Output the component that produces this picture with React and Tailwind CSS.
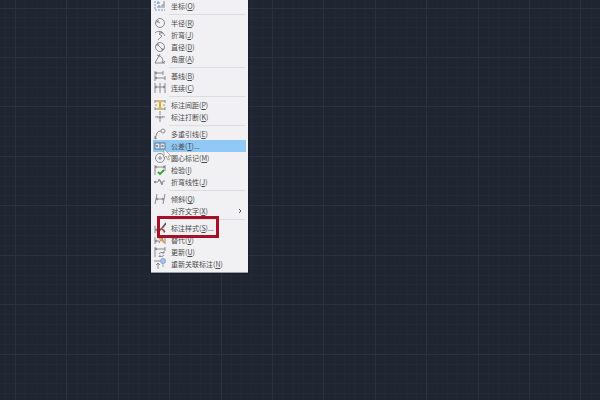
import React from 'react';

const MAJOR_X = 51.4;
const MAJOR_Y = 49.45;

const icons = {
  ordinate: (
    <>
      <path d="M1 1v9h10" stroke="#5b93d6" strokeDasharray="2 1" />
      <path d="M4 1v3M3 3h3" stroke="#5b93d6" />
      <path d="M4 8V6h2v2M8 8V5M10 8V1M8 5h2" />
    </>
  ),
  radius: (
    <>
      <circle cx="6" cy="6" r="4.5" />
      <path d="M6 6L3 4M5 4H3v2" />
    </>
  ),
  jogged: <path d="M1 4C4 1 9 2 11 7M8 3L5 5l3 2-4 4M5 3h3v2" />,
  diameter: (
    <>
      <circle cx="6" cy="6" r="4.5" />
      <path d="M3 3l6 6M3 5V3h2M9 7v2H7" />
    </>
  ),
  angular: <path d="M6 1L1 10h10M5 3c3 0 4 3 4 7M3 2l3 1M8 8l1 2 2-2" />,
  baseline: <path d="M1 1v10M1 3h8M9 1v4M1 8h10M11 6v4M3 2L1 3l2 1M3 7L1 8l2 1" />,
  continued: <path d="M1 1v10M6 1v10M11 1v10M1 5h10M3 4L1 5l2 1M9 4l2 1-2 1" />,
  space: (
    <>
      <path d="M1 2h10M1 10h10M1 1v3M11 1v3M1 8v3M11 8v3M1 6h2M9 6h2" />
      <path d="M6 3v6" stroke="#e0a11b" strokeWidth="2" />
      <path d="M3 2l3 3 3-3zM3 10l3-3 3 3z" fill="#e6b23c" stroke="none" />
    </>
  ),
  breakDim: <path d="M6 0v4M6 8v3M1 6h3M8 6h3M4 5v2M8 5v2M5 8l1-3 1 3" />,
  leader: (
    <>
      <path d="M1 11L3 5q1-2 4-2M1 8v3l2-1" />
      <circle cx="9" cy="3" r="2" />
    </>
  ),
  tolerance: (
    <>
      <rect x="1" y="3" width="10" height="6" fill="#dde6ee" stroke="#5f6f80" />
      <path d="M6 3v6M3 5v2M2 6h2M8 5v2M9 5v2" stroke="#5f6f80" />
    </>
  ),
  center: (
    <>
      <circle cx="6" cy="6" r="4.5" />
      <path d="M6 4v4M4 6h4" />
    </>
  ),
  inspect: (
    <>
      <path d="M1 1v10M11 1v6M1 3h10M3 2L1 3l2 1M9 2l2 1-2 1" />
      <path d="M4 8l2 2 4-4" stroke="#2fa52f" strokeWidth="1.8" />
    </>
  ),
  jogLine: <path d="M0 6h4l1-3 3 6 1-4h2M2 5L0 6l2 1M6 4l2 4" />,
  oblique: <path d="M3 1L1 11M11 1L9 11M2 6h8M4 5L2 6l2 1M8 5l2 1-2 1" />,
  style: (
    <>
      <path d="M1 4v7M1 8h5M3 7L1 8l2 1M10 7v4" />
      <path d="M5 9l5-5M8 7l3 3" stroke="#9a4a3a" strokeWidth="1.5" />
      <path d="M9 5l3-4" stroke="#555" strokeWidth="1.5" />
    </>
  ),
  override: (
    <>
      <path d="M1 3v7M1 7h4M3 6L1 7l2 1M11 3v7" />
      <path d="M5 9l3-6 2 6" stroke="#777" />
      <path d="M5 4l5 4" stroke="#e5a040" strokeWidth="1.8" />
    </>
  ),
  update: (
    <>
      <path d="M1 1v10M11 1v4M1 3h10M3 2L1 3l2 1" />
      <path d="M5 8a3 2 0 0 1 5-1M10 9a3 2 0 0 1-5 1M10 5v2H8M5 11v-1h2" />
    </>
  ),
  reassociate: (
    <>
      <path d="M0 3h6M4 5v6M2 7l2-2 2 2" />
      <circle cx="9" cy="3" r="2.5" stroke="#7d9fcc" fill="#a8c4e6" />
      <path d="M9 6v3" stroke="#7d9fcc" />
    </>
  ),
};

const groups = [
  [{ label: '坐标', accel: 'O', icon: 'ordinate' }],
  [
    { label: '半径', accel: 'R', icon: 'radius' },
    { label: '折弯', accel: 'J', icon: 'jogged' },
    { label: '直径', accel: 'D', icon: 'diameter' },
    { label: '角度', accel: 'A', icon: 'angular' },
  ],
  [
    { label: '基线', accel: 'B', icon: 'baseline' },
    { label: '连续', accel: 'C', icon: 'continued' },
  ],
  [
    { label: '标注间距', accel: 'P', icon: 'space' },
    { label: '标注打断', accel: 'K', icon: 'breakDim' },
  ],
  [
    { label: '多重引线', accel: 'E', icon: 'leader' },
    { label: '公差', accel: 'T', icon: 'tolerance', dialog: true, active: true },
    { label: '圆心标记', accel: 'M', icon: 'center' },
    { label: '检验', accel: 'I', icon: 'inspect' },
    { label: '折弯线性', accel: 'J', icon: 'jogLine' },
  ],
  [
    { label: '倾斜', accel: 'Q', icon: 'oblique' },
    { label: '对齐文字', accel: 'X', submenu: true },
  ],
  [
    { label: '标注样式', accel: 'S', icon: 'style', dialog: true, marked: true },
    { label: '替代', accel: 'V', icon: 'override' },
    { label: '更新', accel: 'U', icon: 'update' },
    { label: '重新关联标注', accel: 'N', icon: 'reassociate' },
  ],
];

function DrawingGrid() {
  const lines = [];
  // five minor cells to every major one
  for (let i = -4; i < 250; i++) {
    const major = i % 5 === 0;
    const stroke = major ? '#2b323e' : '#232a35';
    const x = Math.round(15 + (i * MAJOR_X) / 5) + 0.5;
    const y = Math.round(7.5 + (i * MAJOR_Y) / 5) + 0.5;
    const line = { stroke, major };
    lines.push({ ...line, key: `x${i}`, x1: x, x2: x, y1: 0, y2: '100%' });
    lines.push({ ...line, key: `y${i}`, x1: 0, x2: '100%', y1: y, y2: y });
  }
  lines.sort((a, b) => a.major - b.major);

  return (
    <svg className="absolute inset-0 w-full h-full" aria-hidden="true">
      {lines.map(({ key, major, ...rest }) => (
        <line key={key} {...rest} />
      ))}
    </svg>
  );
}

function Cursor() {
  return (
    <svg viewBox="0 0 9 13" className="absolute left-2.5 top-2 z-10 w-[9px] h-[13px]" aria-hidden="true">
      <path d="M1 1v9l2-2 2 4 1.5-.7L5 8h3z" fill="#fff" stroke="#888" strokeWidth="0.7" />
    </svg>
  );
}

function MenuItem({ item }) {
  return (
    <li role="none" className="relative">
      <button
        role="menuitem"
        className={`flex items-center w-full h-3 pl-px text-left ${item.active ? 'bg-[#90c8f6]' : 'hover:bg-[#90c8f6]'}`}
      >
        <span className="w-3 h-3 shrink-0">
          {item.icon && (
            <svg viewBox="0 0 12 12" className="w-3 h-3" fill="none" stroke="#808085" strokeWidth="0.9" aria-hidden="true">
              {icons[item.icon]}
            </svg>
          )}
        </span>
        <span className="ml-[5px] whitespace-nowrap">
          {item.label}(<u>{item.accel}</u>){item.dialog && '...'}
        </span>
        {item.submenu && (
          <svg viewBox="0 0 4 6" className="ml-auto mr-1 w-1 h-1.5" fill="none" stroke="#555" aria-hidden="true">
            <path d="M1 1l2 2-2 2" />
          </svg>
        )}
      </button>
      {item.active && <Cursor />}
      {item.marked && (
        <span className="absolute left-1 -top-1.5 z-10 w-[62px] h-[22px] border-3 border-[#a80f2b] pointer-events-none" />
      )}
    </li>
  );
}

export default function App() {
  return (
    <main className="relative min-h-screen overflow-hidden bg-[#202631]">
      <DrawingGrid />
      <nav
        className="absolute top-0 left-[151px] px-0.5 pb-0.5 w-[97px] bg-[#f1f1f4] border-b border-[#9a9ca8] shadow-[0_0_2px_#0c1024] text-[7px] leading-3 text-[#4a4a4a]"
        style={{ fontFamily: '"Noto Sans CJK SC", sans-serif' }}
      >
        <ul role="menu">
          {groups.map((group, i) => (
            <React.Fragment key={i}>
              {i > 0 && (
                <li role="separator" className="py-0.5 pl-4">
                  <div className="h-px bg-[#dcdce0]" />
                </li>
              )}
              {group.map((item) => (
                <MenuItem key={item.label} item={item} />
              ))}
            </React.Fragment>
          ))}
        </ul>
      </nav>
    </main>
  );
}
